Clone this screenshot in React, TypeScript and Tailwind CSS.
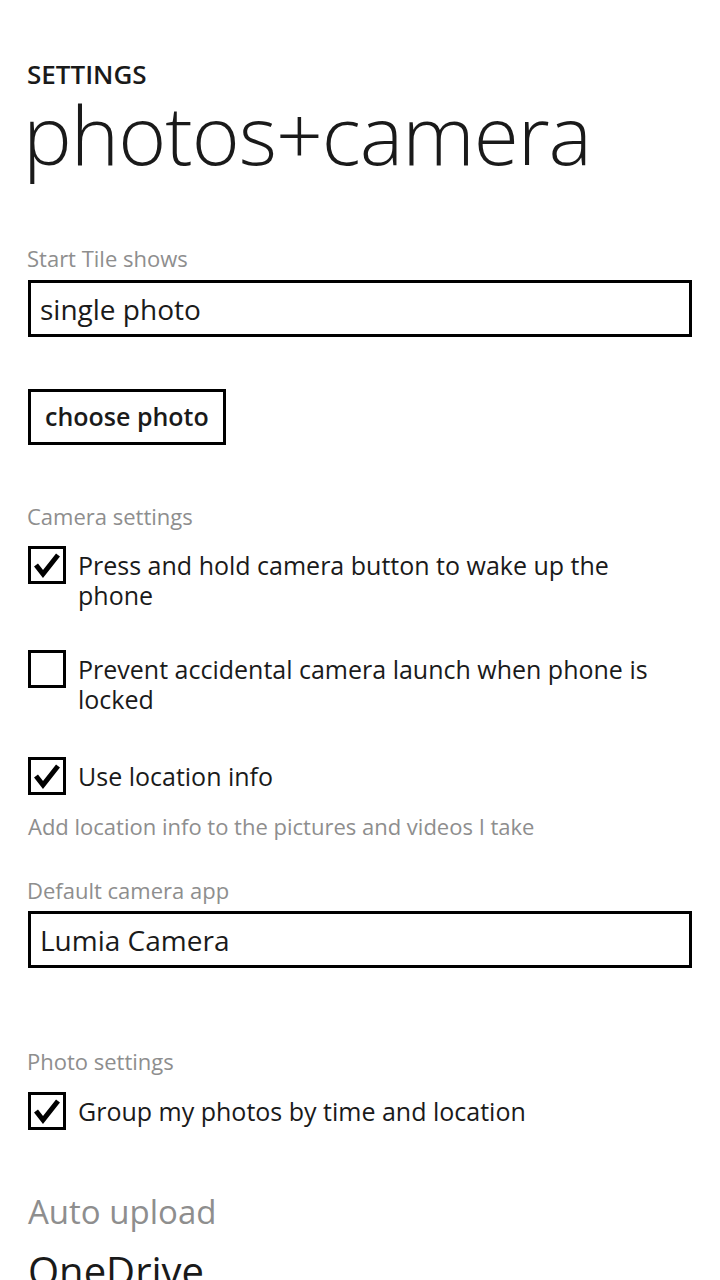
import React from "react";

const font = { fontFamily: '"Open Sans", "Noto Sans", sans-serif' };

function Check({ checked }: { checked: boolean }) {
  return (
    <div className="w-[38px] h-[38px] shrink-0 border-[3px] border-black bg-white flex items-center justify-center">
      {checked && (
        <svg width="32" height="32" viewBox="0 0 32 32">
          <polyline points="5,16 12,25 27,6" fill="none" stroke="#000" strokeWidth="5" strokeLinecap="butt" strokeLinejoin="miter" />
        </svg>
      )}
    </div>
  );
}

function CheckRow({ checked, text }: { checked: boolean; text: string }) {
  return (
    <div className="flex items-start gap-[12px]">
      <Check checked={checked} />
      <div className="text-[25px] leading-[30px] text-[#1a1a1a] pt-[4px] pr-[40px]">{text}</div>
    </div>
  );
}

function Label({ children, className = "" }: { children: React.ReactNode; className?: string }) {
  return <div className={"text-[22px] leading-[26px] text-[#8e8e8e] " + className}>{children}</div>;
}

function Box({ children }: { children: React.ReactNode }) {
  return (
    <div className="h-[57px] border-[3px] border-black flex items-center px-[9px] text-[28px] text-[#1a1a1a]">
      {children}
    </div>
  );
}

export default function App() {
  return (
    <div className="w-[720px] h-[1280px] bg-white overflow-hidden pl-[28px] pr-[28px]" style={font}>
      <div className="pt-[58px] text-[26px] leading-[32px] font-semibold text-[#1a1a1a] -ml-[1px]">SETTINGS</div>
      <div className="text-[82px] leading-[90px] font-light text-[#1a1a1a] -ml-[5px] tracking-[-1px] mt-[-2px]">photos+camera</div>

      <Label className="mt-[67px] -ml-[1px]">Start Tile shows</Label>
      <div className="mt-[9px]">
        <Box>single photo</Box>
      </div>

      <div className="mt-[52px] inline-flex h-[56px] border-[3px] border-black items-center px-[14px] text-[25px] font-semibold text-[#1a1a1a]">
        choose photo
      </div>

      <Label className="mt-[58px] -ml-[1px]">Camera settings</Label>
      <div className="mt-[17px]">
        <CheckRow checked text="Press and hold camera button to wake up the phone" />
      </div>
      <div className="mt-[40px]">
        <CheckRow checked={false} text="Prevent accidental camera launch when phone is locked" />
      </div>
      <div className="mt-[43px]">
        <CheckRow checked text="Use location info" />
      </div>
      <Label className="mt-[18px]">Add location info to the pictures and videos I take</Label>

      <Label className="mt-[38px] -ml-[1px]">Default camera app</Label>
      <div className="mt-[8px]">
        <Box>Lumia Camera</Box>
      </div>

      <Label className="mt-[80px] -ml-[1px]">Photo settings</Label>
      <div className="mt-[18px]">
        <CheckRow checked text="Group my photos by time and location" />
      </div>

      <div className="mt-[62px] text-[33px] leading-[40px] text-[#8e8e8e]">Auto upload</div>
      <div className="mt-[15px] text-[40px] leading-[48px] text-[#1a1a1a]">OneDrive</div>
    </div>
  );
}
